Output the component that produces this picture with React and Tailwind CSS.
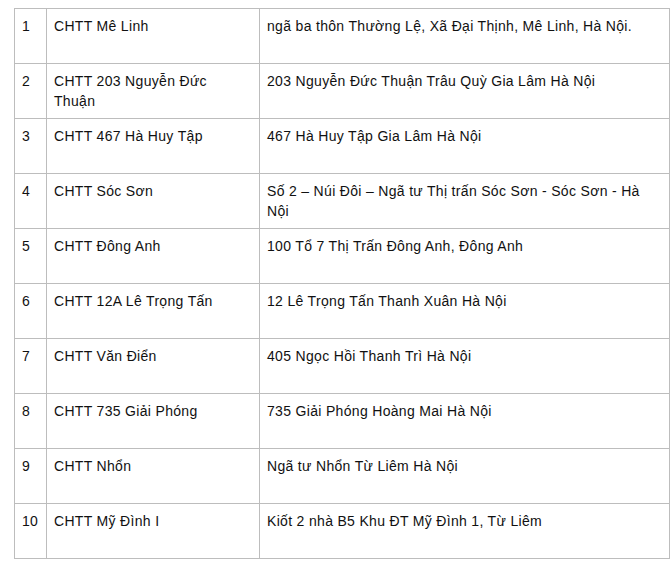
const rows = [
  ["1", "CHTT Mê Linh", "ngã ba thôn Thường Lệ, Xã Đại Thịnh, Mê Linh, Hà Nội."],
  ["2", "CHTT 203 Nguyễn Đức Thuận", "203 Nguyễn Đức Thuận Trâu Quỳ Gia Lâm Hà Nội"],
  ["3", "CHTT 467 Hà Huy Tập", "467 Hà Huy Tập Gia Lâm Hà Nội"],
  ["4", "CHTT Sóc Sơn", "Số 2 – Núi Đôi – Ngã tư Thị trấn Sóc Sơn - Sóc Sơn - Hà Nội"],
  ["5", "CHTT Đông Anh", "100 Tổ 7 Thị Trấn Đông Anh, Đông Anh"],
  ["6", "CHTT 12A Lê Trọng Tấn", "12 Lê Trọng Tấn Thanh Xuân Hà Nội"],
  ["7", "CHTT Văn Điển", "405 Ngọc Hồi Thanh Trì Hà Nội"],
  ["8", "CHTT 735 Giải Phóng", "735 Giải Phóng Hoàng Mai Hà Nội"],
  ["9", "CHTT Nhổn", "Ngã tư Nhổn Từ Liêm Hà Nội"],
  ["10", "CHTT Mỹ Đình I", "Kiốt 2 nhà B5 Khu ĐT Mỹ Đình 1, Từ Liêm"],
];

export default function App() {
  return (
    <div className="w-[672px] h-[561px] bg-white pt-[8px] pl-[14px]" style={{ fontFamily: '"Liberation Sans", Arial, sans-serif' }}>
      <div className="grid grid-cols-[32px_213px_410px] border-l border-t border-[#bdbdbd] w-[656px] text-[14px] leading-[20px] tracking-[0.32px] text-[#111]">
        {rows.map((r) => (
          <div key={r[0]} className="contents">
            <div className="h-[55px] border-r border-b border-[#bdbdbd] px-[7px] pt-[7px]">{r[0]}</div>
            <div className="h-[55px] border-r border-b border-[#bdbdbd] px-[7px] pt-[7px]">{r[1]}</div>
            <div className="h-[55px] border-r border-b border-[#bdbdbd] px-[7px] pt-[7px]">{r[2]}</div>
          </div>
        ))}
      </div>
    </div>
  );
}
